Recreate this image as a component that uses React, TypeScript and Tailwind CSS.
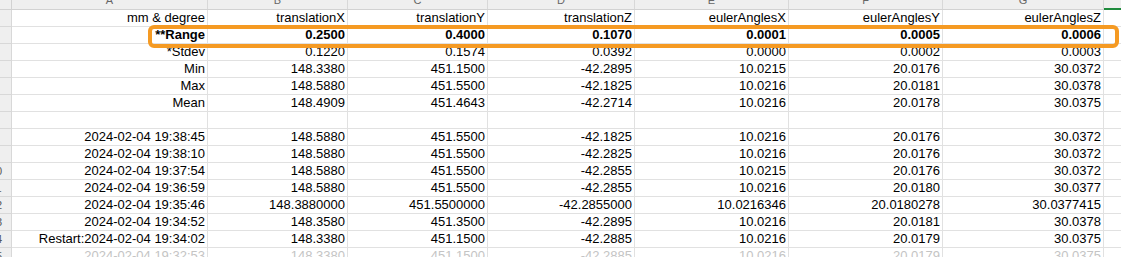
import React from "react";

const colWidths = ["w-[196px]", "w-[140px]", "w-[140px]", "w-[147px]", "w-[154px]", "w-[154px]", "w-[161px]"];
const letters = ["A", "B", "C", "D", "E", "F", "G"];

const rows: string[][] = [
  ["mm & degree", "translationX", "translationY", "translationZ", "eulerAnglesX", "eulerAnglesY", "eulerAnglesZ"],
  ["**Range", "0.2500", "0.4000", "0.1070", "0.0001", "0.0005", "0.0006"],
  ["*Stdev", "0.1220", "0.1574", "0.0392", "0.0000", "0.0002", "0.0003"],
  ["Min", "148.3380", "451.1500", "-42.2895", "10.0215", "20.0176", "30.0372"],
  ["Max", "148.5880", "451.5500", "-42.1825", "10.0216", "20.0181", "30.0378"],
  ["Mean", "148.4909", "451.4643", "-42.2714", "10.0216", "20.0178", "30.0375"],
  ["", "", "", "", "", "", ""],
  ["2024-02-04 19:38:45", "148.5880", "451.5500", "-42.1825", "10.0216", "20.0176", "30.0372"],
  ["2024-02-04 19:38:10", "148.5880", "451.5500", "-42.2825", "10.0216", "20.0176", "30.0372"],
  ["2024-02-04 19:37:54", "148.5880", "451.5500", "-42.2855", "10.0215", "20.0176", "30.0372"],
  ["2024-02-04 19:36:59", "148.5880", "451.5500", "-42.2855", "10.0216", "20.0180", "30.0377"],
  ["2024-02-04 19:35:46", "148.3880000", "451.5500000", "-42.2855000", "10.0216346", "20.0180278", "30.0377415"],
  ["2024-02-04 19:34:52", "148.3580", "451.3500", "-42.2895", "10.0216", "20.0181", "30.0378"],
  ["Restart:2024-02-04 19:34:02", "148.3380", "451.1500", "-42.2885", "10.0216", "20.0179", "30.0375"],
  ["2024-02-04 19:32:53", "148.3380", "451.1500", "-42.2885", "10.0216", "20.0179", "30.0375"],
];

export default function App() {
  return (
    <div
      className="relative w-[1121px] h-[257px] overflow-hidden bg-white"
      style={{ fontFamily: '"Liberation Sans", Arial, sans-serif' }}
    >
      {/* column header row */}
      <div className="flex h-[10px] bg-[#efefef] border-b border-[#d2d2d2]">
        <div className="w-[12px] shrink-0 border-r border-[#d2d2d2]" />
        {letters.map((l, i) => (
          <div
            key={l}
            className={`${colWidths[i]} shrink-0 border-r border-[#d8d8d8] overflow-hidden flex justify-center`}
          >
            <span className="text-[11px] leading-[14px] -mt-[7px] text-[#666]">{l}</span>
          </div>
        ))}
        <div className="flex-1 relative">
          <div className="absolute left-0 right-0 bottom-[-1px] h-[2px] bg-[#1e8a3c]" />
        </div>
      </div>

      {rows.map((r, ri) => {
        const bold = ri === 1;
        const faded = ri === rows.length - 1;
        const num = String(ri + 1);
        return (
          <div key={ri} className="flex h-[17px]">
            <div className="w-[12px] shrink-0 bg-[#efefef] border-r border-b border-[#d8d8d8] overflow-hidden">
              <div className="w-[28px] -ml-[18px] flex justify-center text-[11px] leading-[16px] text-[#555]">
                {num}
              </div>
            </div>
            {r.map((c, ci) => (
              <div
                key={ci}
                className={`${colWidths[ci]} shrink-0 border-r border-b border-[#e1e1e1] text-right pr-[2px] text-[13px] leading-[16px] whitespace-nowrap overflow-hidden ${
                  bold ? "font-bold text-black" : faded ? "text-[#c4c4c4]" : "text-black"
                }`}
              >
                {c}
              </div>
            ))}
            <div className="flex-1 border-b border-[#e1e1e1]" />
          </div>
        );
      })}

      {/* orange highlight */}
      <div className="absolute left-[148px] top-[25px] w-[971px] h-[23px] border-[4px] border-[#f59a23] rounded-[6px]" />
    </div>
  );
}
